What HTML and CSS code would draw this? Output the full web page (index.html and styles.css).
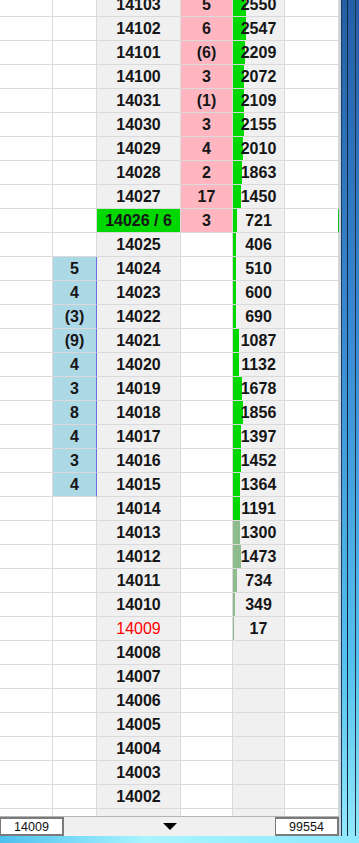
FILE: index.html
```html
<!DOCTYPE html>
<html lang="en">
<head>
    <meta charset="UTF-8">
    <meta name="viewport" content="width=device-width, initial-scale=1.0">
    <title>Price Ladder</title>
    <link rel="stylesheet" href="styles.css">
</head>
<body>

<!-- Window body -->
<div class="window">
    <div class="main">
        <!-- Ladder grid -->
        <div class="ladder">
            <div class="rows" id="rows"></div>
        </div>

        <!-- Status bar -->
        <div class="status">
            <div class="box">14009</div>
            <div class="mid"><span class="arrow"></span></div>
            <div class="box">99554</div>
        </div>
    </div>
    <div class="frame-right"></div>
</div>
<div class="frame-bottom"></div>

<script>
    // price, bid, ask, volume, bar width, bar type
    let data = [
        ["14103", "", "5", "2550", 13, "g"],
        ["14102", "", "6", "2547", 13, "g"],
        ["14101", "", "(6)", "2209", 12, "g"],
        ["14100", "", "3", "2072", 11, "g"],
        ["14031", "", "(1)", "2109", 11, "g"],
        ["14030", "", "3", "2155", 11, "g"],
        ["14029", "", "4", "2010", 10, "g"],
        ["14028", "", "2", "1863", 9, "g"],
        ["14027", "", "17", "1450", 8, "g"],
        ["14026 / 6", "", "3", "721", 4, "g"],
        ["14025", "", "", "406", 3, "g"],
        ["14024", "5", "", "510", 3, "g"],
        ["14023", "4", "", "600", 3, "g"],
        ["14022", "(3)", "", "690", 3, "g"],
        ["14021", "(9)", "", "1087", 6, "g"],
        ["14020", "4", "", "1132", 6, "g"],
        ["14019", "3", "", "1678", 9, "g"],
        ["14018", "8", "", "1856", 10, "g"],
        ["14017", "4", "", "1397", 8, "g"],
        ["14016", "3", "", "1452", 8, "g"],
        ["14015", "4", "", "1364", 7, "g"],
        ["14014", "", "", "1191", 7, "g"],
        ["14013", "", "", "1300", 7, "o"],
        ["14012", "", "", "1473", 8, "o"],
        ["14011", "", "", "734", 4, "o"],
        ["14010", "", "", "349", 2, "o"],
        ["14009", "", "", "17", 1, "o"],
        ["14008", "", "", "", 0, ""],
        ["14007", "", "", "", 0, ""],
        ["14006", "", "", "", 0, ""],
        ["14005", "", "", "", 0, ""],
        ["14004", "", "", "", 0, ""],
        ["14003", "", "", "", 0, ""],
        ["14002", "", "", "", 0, ""],
        ["", "", "", "", 0, ""]
    ];

    let ROWS = document.getElementById("rows");

    for (let i = 0; i < data.length; i++) {
        let d = data[i];
        let row = document.createElement("div");
        row.className = "row";

        let html = '<div class="cell"></div>';
        html += '<div class="cell' + (d[1] ? ' bid' : '') + '">' + d[1] + '</div>';

        let priceClass = "cell price";
        if (d[0].indexOf("/") > 0) priceClass += " last";
        if (d[0] == "14009") priceClass += " current";
        html += '<div class="' + priceClass + '">' + d[0] + '</div>';

        html += '<div class="cell' + (d[2] ? ' ask' : '') + '">' + d[2] + '</div>';

        let vol = '<div class="cell vol">';
        if (d[4] > 0) {
            vol += '<span class="bar' + (d[5] == "o" ? ' old' : '') + '" style="width:' + d[4] + 'px"></span>';
        }
        vol += '<span class="num">' + d[3] + '</span></div>';
        html += vol;

        html += '<div class="cell' + (d[0].indexOf("/") > 0 ? ' marker' : '') + '"></div>';

        row.innerHTML = html;
        ROWS.appendChild(row);
    }
</script>

</body>
</html>
```

FILE: styles.css
```css
body {
    margin: 0;
    font-family: "Liberation Sans", Arial, sans-serif;
    background-color: #ffffff;
    overflow: hidden;
}

/* Window layout */
.window {
    display: flex;
    height: 836px;
}

.main {
    width: 339px;
    display: flex;
    flex-direction: column;
}

.ladder {
    flex: 1;
    overflow: hidden;
}

.rows {
    margin-top: -7px;
}

/* Ladder rows */
.row {
    display: grid;
    grid-template-columns: 53px 44px 84px 52px 52px 54px;
    height: 24px;
}

.cell {
    position: relative;
    box-sizing: border-box;
    display: flex;
    align-items: center;
    justify-content: center;
    border-right: 1px solid #dadada;
    border-bottom: 1px solid #dadada;
    font-size: 16px;
    font-weight: bold;
    color: #161616;
}

.price, .vol {
    background-color: #f0f0f0;
}

.bid {
    background-color: #add8e6;
    border-right-color: #6f6fe0;
}

.ask {
    background-color: #ffb6c1;
}

.price.last {
    background-color: #00d800;
}

.price.current {
    color: #ff0000;
    font-weight: normal;
}

.marker {
    border-right-color: #20c020;
}

/* Volume bars */
.bar {
    position: absolute;
    left: 0;
    top: 0;
    bottom: 0;
    background-color: #00d800;
}

.bar.old {
    background-color: #8fbc8f;
}

.num {
    position: relative;
}

/* Status bar */
.status {
    height: 20px;
    display: flex;
    box-sizing: border-box;
    background-color: #f0f0f0;
    border-top: 1px solid #b4b4b4;
    font-size: 12.5px;
    color: #111;
}

.status .box {
    width: 64px;
    box-sizing: border-box;
    display: flex;
    align-items: center;
    justify-content: center;
    background-color: #ffffff;
    border: 2px solid #7a7a7a;
    border-left-width: 1px;
}

.status .mid {
    flex: 1;
    display: flex;
    align-items: center;
    justify-content: center;
}

.arrow {
    width: 0;
    height: 0;
    border-left: 7px solid transparent;
    border-right: 7px solid transparent;
    border-top: 7px solid #000;
}

/* Window frame */
.frame-right {
    width: 20px;
    background:
        linear-gradient(to right, #c9d3dc 0 2px, #213a55 2px 3px, transparent 3px 8px, #0f2740 8px 9px, transparent 9px 16px, #1d3347 16px 17px, transparent 17px),
        linear-gradient(to bottom, #245fa6, #3a8ad2 40%, #56c2ee 80%, #92e8fa);
}

.frame-bottom {
    height: 7px;
    background: linear-gradient(to right, #4cc0ee, #a8f4ff 40%, #8ee8fc);
}
```
